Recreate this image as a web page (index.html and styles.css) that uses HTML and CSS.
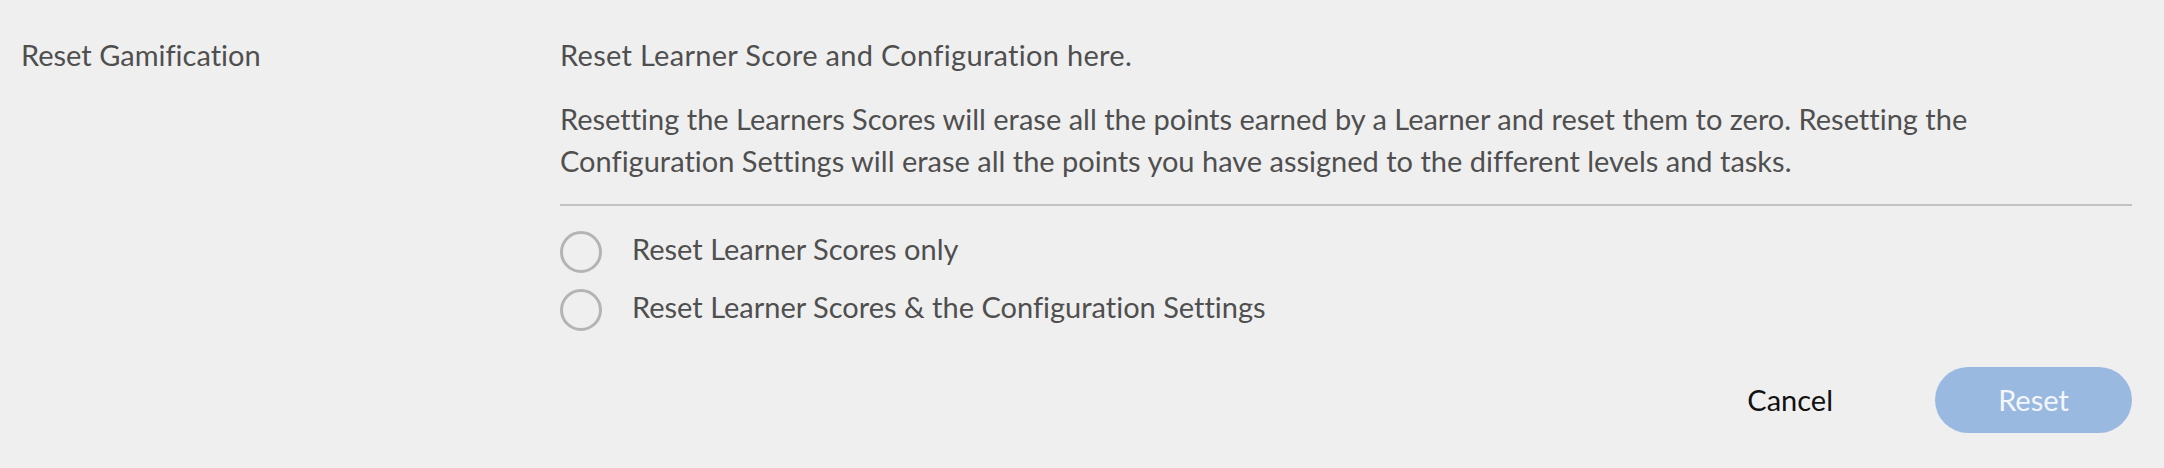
FILE: index.html
```html
<!DOCTYPE html>
<html lang="en">
<head>
<meta charset="utf-8">
<title>Reset Gamification</title>
<link rel="stylesheet" href="styles.css">
</head>
<body>
<section class="setting">
  <div class="setting-label">Reset Gamification</div>
  <div class="setting-body">
    <p class="intro">Reset Learner Score and Configuration here.</p>
    <p class="desc">Resetting the Learners Scores will erase all the points earned by a Learner and reset them to zero. Resetting the Configuration Settings will erase all the points you have assigned to the different levels and tasks.</p>
    <div class="options">
      <label class="option"><span class="radio"></span><span class="option-text">Reset Learner Scores only</span></label>
      <label class="option"><span class="radio"></span><span class="option-text">Reset Learner Scores &amp; the Configuration Settings</span></label>
    </div>
    <div class="actions">
      <button class="btn-cancel" type="button">Cancel</button>
      <button class="btn-reset" type="button">Reset</button>
    </div>
  </div>
</section>
</body>
</html>
```
FILE: styles.css
```css
html, body {
  margin: 0;
  padding: 0;
  background: #efefef;
}
body {
  font-family: Lato, "Noto Sans", sans-serif;
  font-size: 29px;
  color: #4f4f4f;
  font-variant-ligatures: none;
  width: 2164px;
  height: 468px;
  overflow: hidden;
}
.setting {
  display: flex;
  padding: 34px 32px 0 21px;
}
.setting-label {
  width: 539px;
  flex: none;
  line-height: 42px;
}
.setting-body {
  flex: 1;
  display: flex;
  flex-direction: column;
}
.intro, .desc {
  margin: 0;
  line-height: 42px;
}
.intro {
  letter-spacing: 0.3px;
}
.desc {
  margin-top: 22px;
  padding-bottom: 22px;
  border-bottom: 2px solid #c2c2c2;
}
.options {
  display: flex;
  flex-direction: column;
  gap: 16px;
  margin-top: 25px;
}
.option {
  display: flex;
  align-items: flex-start;
  height: 42px;
}
.radio {
  width: 36px;
  height: 36px;
  border: 3px solid #b4b4b4;
  border-radius: 50%;
  flex: none;
}
.option-text {
  margin-left: 30px;
  line-height: 36px;
}
.actions {
  display: flex;
  justify-content: flex-end;
  align-items: center;
  margin-top: 36px;
}
.btn-cancel, .btn-reset {
  font-family: inherit;
  font-size: 29px;
  font-variant-ligatures: none;
  border: none;
  height: 66px;
  line-height: 66px;
  padding: 0;
  cursor: pointer;
}
.btn-cancel {
  background: transparent;
  color: #111;
  margin-right: 102px;
}
.btn-reset {
  width: 197px;
  border-radius: 33px;
  background: #9ab9e0;
  color: #f3f6fb;
}
```
